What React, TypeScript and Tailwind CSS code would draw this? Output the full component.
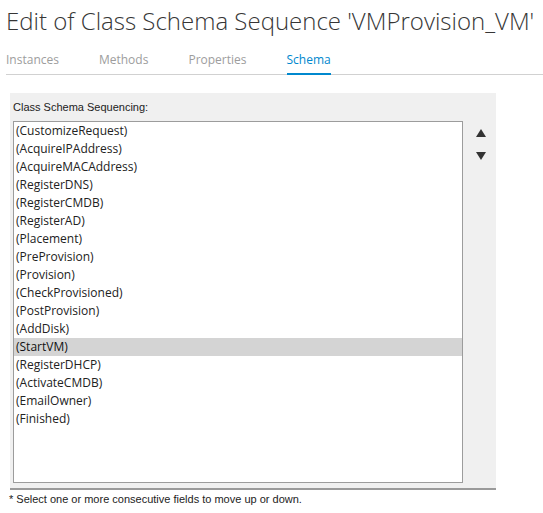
import React from 'react'

const tabs = ['Instances', 'Methods', 'Properties', 'Schema']

const fields = [
  '(CustomizeRequest)',
  '(AcquireIPAddress)',
  '(AcquireMACAddress)',
  '(RegisterDNS)',
  '(RegisterCMDB)',
  '(RegisterAD)',
  '(Placement)',
  '(PreProvision)',
  '(Provision)',
  '(CheckProvisioned)',
  '(PostProvision)',
  '(AddDisk)',
  '(StartVM)',
  '(RegisterDHCP)',
  '(ActivateCMDB)',
  '(EmailOwner)',
  '(Finished)',
]

export default function App() {
  const selected = '(StartVM)'

  return (
    <div className="w-[543px] h-[513px] bg-white font-['Open_Sans',sans-serif] overflow-hidden">
      {/* Title */}
      <h1 className="pl-[6px] pt-[5px] text-[24px] leading-[32px] font-light text-[#363636] whitespace-nowrap">
        Edit of Class Schema Sequence 'VMProvision_VM'
      </h1>

      {/* Tabs */}
      <div className="ml-[6px] mt-[15px] flex items-end gap-[40px] border-b border-[#d1d1d1]">
        {tabs.map((t) => (
          <div
            key={t}
            className={
              t === 'Schema'
                ? 'mb-[-1px] pb-[5px] border-b-2 border-[#0088ce] text-[12px] leading-[16px] text-[#0088ce]'
                : 'mb-[-1px] pb-[5px] border-b-2 border-transparent text-[12px] leading-[16px] text-[#9d9d9d]'
            }
          >
            {t}
          </div>
        ))}
      </div>

      {/* Panel */}
      <div className="ml-[10px] mt-[18px] w-[486px] bg-[#f0f0f0] border-b-2 border-[#9a9a9a] pl-[3px] pt-[8px] pb-[5px]">
        <div className="font-['Liberation_Sans',Arial,sans-serif] text-[11px] leading-[13px] text-[#222]">
          Class Schema Sequencing:
        </div>
        <div className="mt-[7px] flex items-start">
          <div className="w-[450px] h-[362px] bg-white border border-[#9c9c9c]">
            {fields.map((f) => (
              <div
                key={f}
                className={
                  f === selected
                    ? 'h-[18px] pl-[2px] text-[12px] leading-[18px] text-[#111] bg-[#d4d4d4]'
                    : 'h-[18px] pl-[2px] text-[12px] leading-[18px] text-[#222]'
                }
              >
                {f}
              </div>
            ))}
          </div>
          <div className="ml-[13px] pt-[8px] flex flex-col gap-[15px]">
            <svg width="10" height="8" viewBox="0 0 10 8">
              <path d="M5 0 L10 8 L0 8 Z" fill="#333" />
            </svg>
            <svg width="10" height="8" viewBox="0 0 10 8">
              <path d="M0 0 L10 0 L5 8 Z" fill="#333" />
            </svg>
          </div>
        </div>
      </div>

      {/* Footnote */}
      <div className="ml-[9px] mt-[3px] font-['Liberation_Sans',Arial,sans-serif] text-[11px] leading-[13px] text-[#222]">
        * Select one or more consecutive fields to move up or down.
      </div>
    </div>
  )
}
